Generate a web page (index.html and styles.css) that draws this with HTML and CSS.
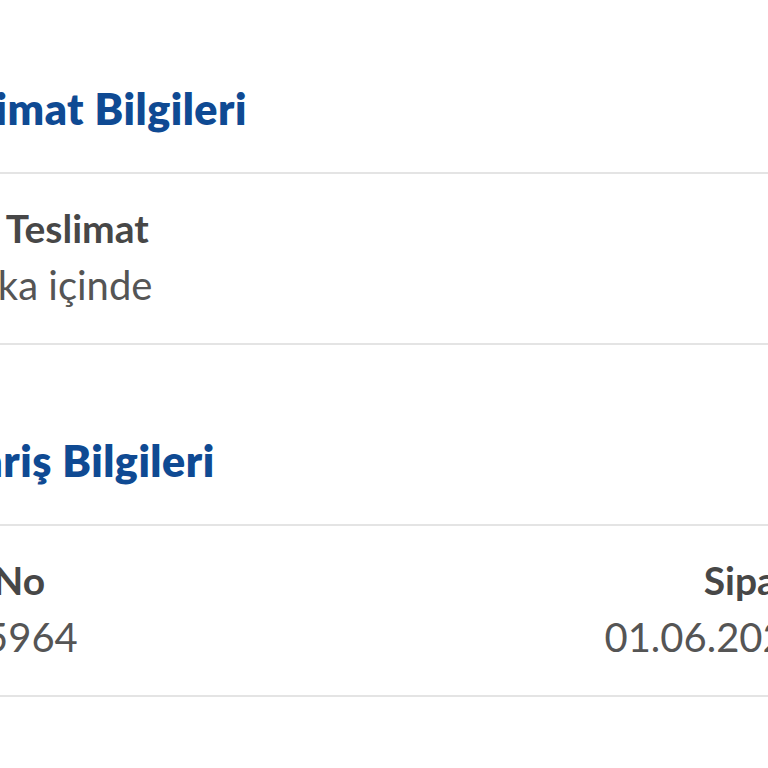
FILE: index.html
```html
<!DOCTYPE html>
<html lang="tr">
<head>
    <meta charset="UTF-8">
    <meta name="viewport" content="width=device-width, initial-scale=1.0">
    <title>Sipariş Detayı</title>
    <link rel="stylesheet" href="styles.css">
</head>
<body>
    <div class="page">
        <section class="info-section">
            <h2 class="section-title">Teslimat Bilgileri</h2>
            <div class="info-row">
                <div class="info-cell">
                    <div class="info-label">Normal Teslimat</div>
                    <div class="info-value">30 dakika içinde</div>
                </div>
            </div>
        </section>

        <section class="info-section">
            <h2 class="section-title">Sipariş Bilgileri</h2>
            <div class="info-row">
                <div class="info-cell">
                    <div class="info-label">Sipariş No</div>
                    <div class="info-value">123455964</div>
                </div>
                <div class="info-cell right">
                    <div class="info-label">Sipariş Tarihi</div>
                    <div class="info-value">01.06.2024 14:35</div>
                </div>
            </div>
        </section>
    </div>
</body>
</html>
```

FILE: styles.css
```css
body {
    margin: 0;
    background: #fff;
    font-family: Lato, "Noto Sans", sans-serif;
    overflow: hidden;
}
.page {
    margin: 0 -154px 0 -131px;
    padding-top: 83px;
}
.info-section + .info-section {
    margin-top: 90px;
}
.section-title {
    margin: 0;
    padding: 0 0 37px 50px;
    font-size: 43px;
    line-height: 52px;
    letter-spacing: 0.5px;
    font-weight: 800;
    color: #0f4a93;
    border-bottom: 2px solid #e4e4e4;
}
.info-row {
    display: flex;
    justify-content: space-between;
    padding: 26px 0 29px;
    border-bottom: 2px solid #e4e4e4;
}
.info-cell.right {
    text-align: right;
}
.info-label {
    font-size: 39px;
    line-height: 57px;
    font-weight: 700;
    color: #474747;
}
.info-value {
    font-size: 40px;
    line-height: 57px;
    color: #555;
}
```
